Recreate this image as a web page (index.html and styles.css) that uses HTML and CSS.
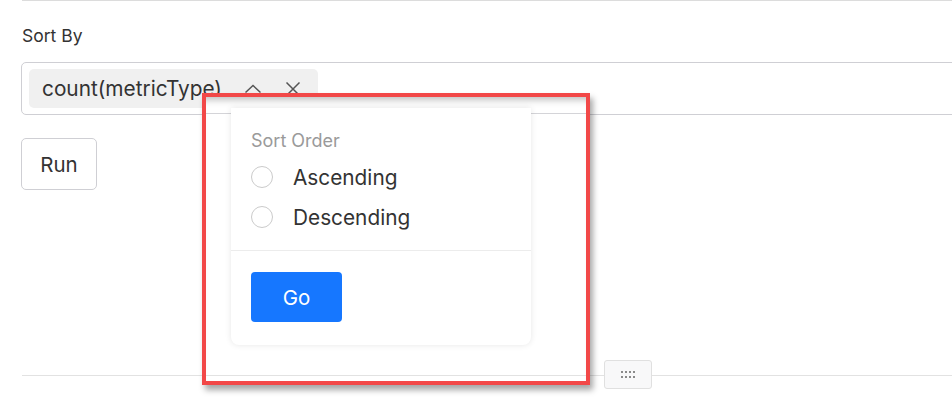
FILE: index.html
```html
<!DOCTYPE html>
<html>
<head>
<meta charset="utf-8">
<link rel="stylesheet" href="styles.css">
</head>
<body>
<div class="page">
  <div class="top-rule"></div>
  <div class="field-label">Sort By</div>
  <div class="select-box">
    <div class="tag">
      <span class="tag-text">count(metricType)</span>
      <svg class="tag-icon" width="18" height="18" viewBox="0 0 18 18"><path d="M1.5 12.5 L9 5.5 L16.5 12.5" fill="none" stroke="#555" stroke-width="1.5"/></svg>
      <svg class="tag-icon" width="18" height="18" viewBox="0 0 18 18"><path d="M2.5 2.5 L15.5 15.5 M15.5 2.5 L2.5 15.5" fill="none" stroke="#555" stroke-width="1.5"/></svg>
    </div>
  </div>
  <button class="run-btn">Run</button>
  <div class="bottom-rule">
    <div class="handle">
      <span class="dots"><i></i><i></i><i></i><i></i><i></i><i></i><i></i><i></i></span>
    </div>
  </div>

  <div class="annotation">
    <div class="popover">
      <div class="pop-body">
        <div class="pop-title">Sort Order</div>
        <label class="radio-row"><span class="radio"></span><span>Ascending</span></label>
        <label class="radio-row"><span class="radio"></span><span>Descending</span></label>
      </div>
      <div class="pop-footer">
        <button class="go-btn">Go</button>
      </div>
    </div>
  </div>
</div>
</body>
</html>
```

FILE: styles.css
```css
html, body {
  margin: 0;
  padding: 0;
  background: #fff;
  overflow: hidden;
}
body {
  font-family: Inter, "Noto Sans", sans-serif;
  color: #333;
  width: 952px;
  height: 411px;
}
.page {
  position: relative;
  height: 411px;
  padding-left: 21px;
}
.top-rule {
  margin-left: 1px;
  border-top: 1px solid #dcdcdc;
  height: 0;
}
.field-label {
  margin-top: 24px;
  margin-left: 1px;
  font-size: 17.5px;
  line-height: 22px;
  color: #333;
}
.select-box {
  margin-top: 15px;
  width: 960px;
  height: 53px;
  box-sizing: border-box;
  border: 1px solid #cfcfd4;
  border-radius: 5px;
  padding: 6px 7px;
}
.tag {
  display: inline-flex;
  align-items: center;
  height: 39px;
  box-sizing: border-box;
  padding: 0 16px 0 13px;
  background: #f0f0f0;
  border-radius: 5px;
}
.tag-text {
  font-size: 20.8px;
  color: #333;
  margin-right: 22px;
}
.tag-icon {
  display: block;
}
.tag-icon + .tag-icon {
  margin-left: 22px;
}
.run-btn {
  display: block;
  margin-top: 23px;
  width: 76px;
  height: 52px;
  box-sizing: border-box;
  border: 1px solid #cfcfd4;
  border-radius: 5px;
  background: #fff;
  font-family: Inter, sans-serif;
  font-size: 20.5px;
  color: #333;
  padding: 0;
}
.bottom-rule {
  margin-top: 185px;
  margin-left: 1px;
  border-top: 1px solid #e2e2e2;
  height: 0;
  position: relative;
}
.handle {
  position: absolute;
  left: 582px;
  top: -16px;
  width: 48px;
  height: 29px;
  box-sizing: border-box;
  border: 1px solid #e0e0e0;
  border-radius: 3px;
  background: #f8f8f9;
  display: flex;
  align-items: center;
  justify-content: center;
}
.dots {
  display: grid;
  grid-template-columns: repeat(4, 2px);
  gap: 3px 2px;
}
.dots i {
  display: block;
  width: 2px;
  height: 2px;
  background: #8a8a8a;
}

/* screenshot annotation overlay */
.annotation {
  position: absolute;
  left: 202px;
  top: 93px;
  width: 388px;
  height: 292px;
  box-sizing: border-box;
  border: 4px solid #f24848;
  background: #fff;
  box-shadow: 3px 5px 6px rgba(0, 0, 0, 0.35), inset 0 9px 7px -6px rgba(0, 0, 0, 0.25);
  padding: 11px 0 0 25px;
}
.annotation::before {
  content: "";
  position: absolute;
  left: 0;
  right: 0;
  top: 16px;
  border-top: 1px solid #d4d4d8;
}
.annotation::after {
  content: "";
  position: absolute;
  left: 0;
  right: 0;
  top: 278px;
  border-top: 1px solid #e2e2e2;
}
.popover {
  position: relative;
  z-index: 1;
  width: 300px;
  height: 237px;
  background: #fff;
  border-radius: 0 0 8px 8px;
  box-shadow: 0 0 6px rgba(0, 0, 0, 0.1);
}
.pop-body {
  padding: 22px 20px 13px;
  border-bottom: 1px solid #ececec;
}
.pop-title {
  font-size: 18px;
  line-height: 22px;
  color: #9a9a9a;
  margin-bottom: 5px;
}
.radio-row {
  display: flex;
  align-items: center;
  height: 40px;
  font-size: 20.8px;
  color: #333;
}
.radio {
  width: 22px;
  height: 22px;
  box-sizing: border-box;
  border: 1.5px solid #cbcbcb;
  border-radius: 50%;
  margin-right: 20px;
  background: #fff;
}
.pop-footer {
  padding: 21px 20px 0;
}
.go-btn {
  display: block;
  width: 91px;
  height: 50px;
  border: none;
  border-radius: 4px;
  background: #1677ff;
  color: #fff;
  font-family: Inter, sans-serif;
  font-size: 20.5px;
  padding: 0;
}
```
